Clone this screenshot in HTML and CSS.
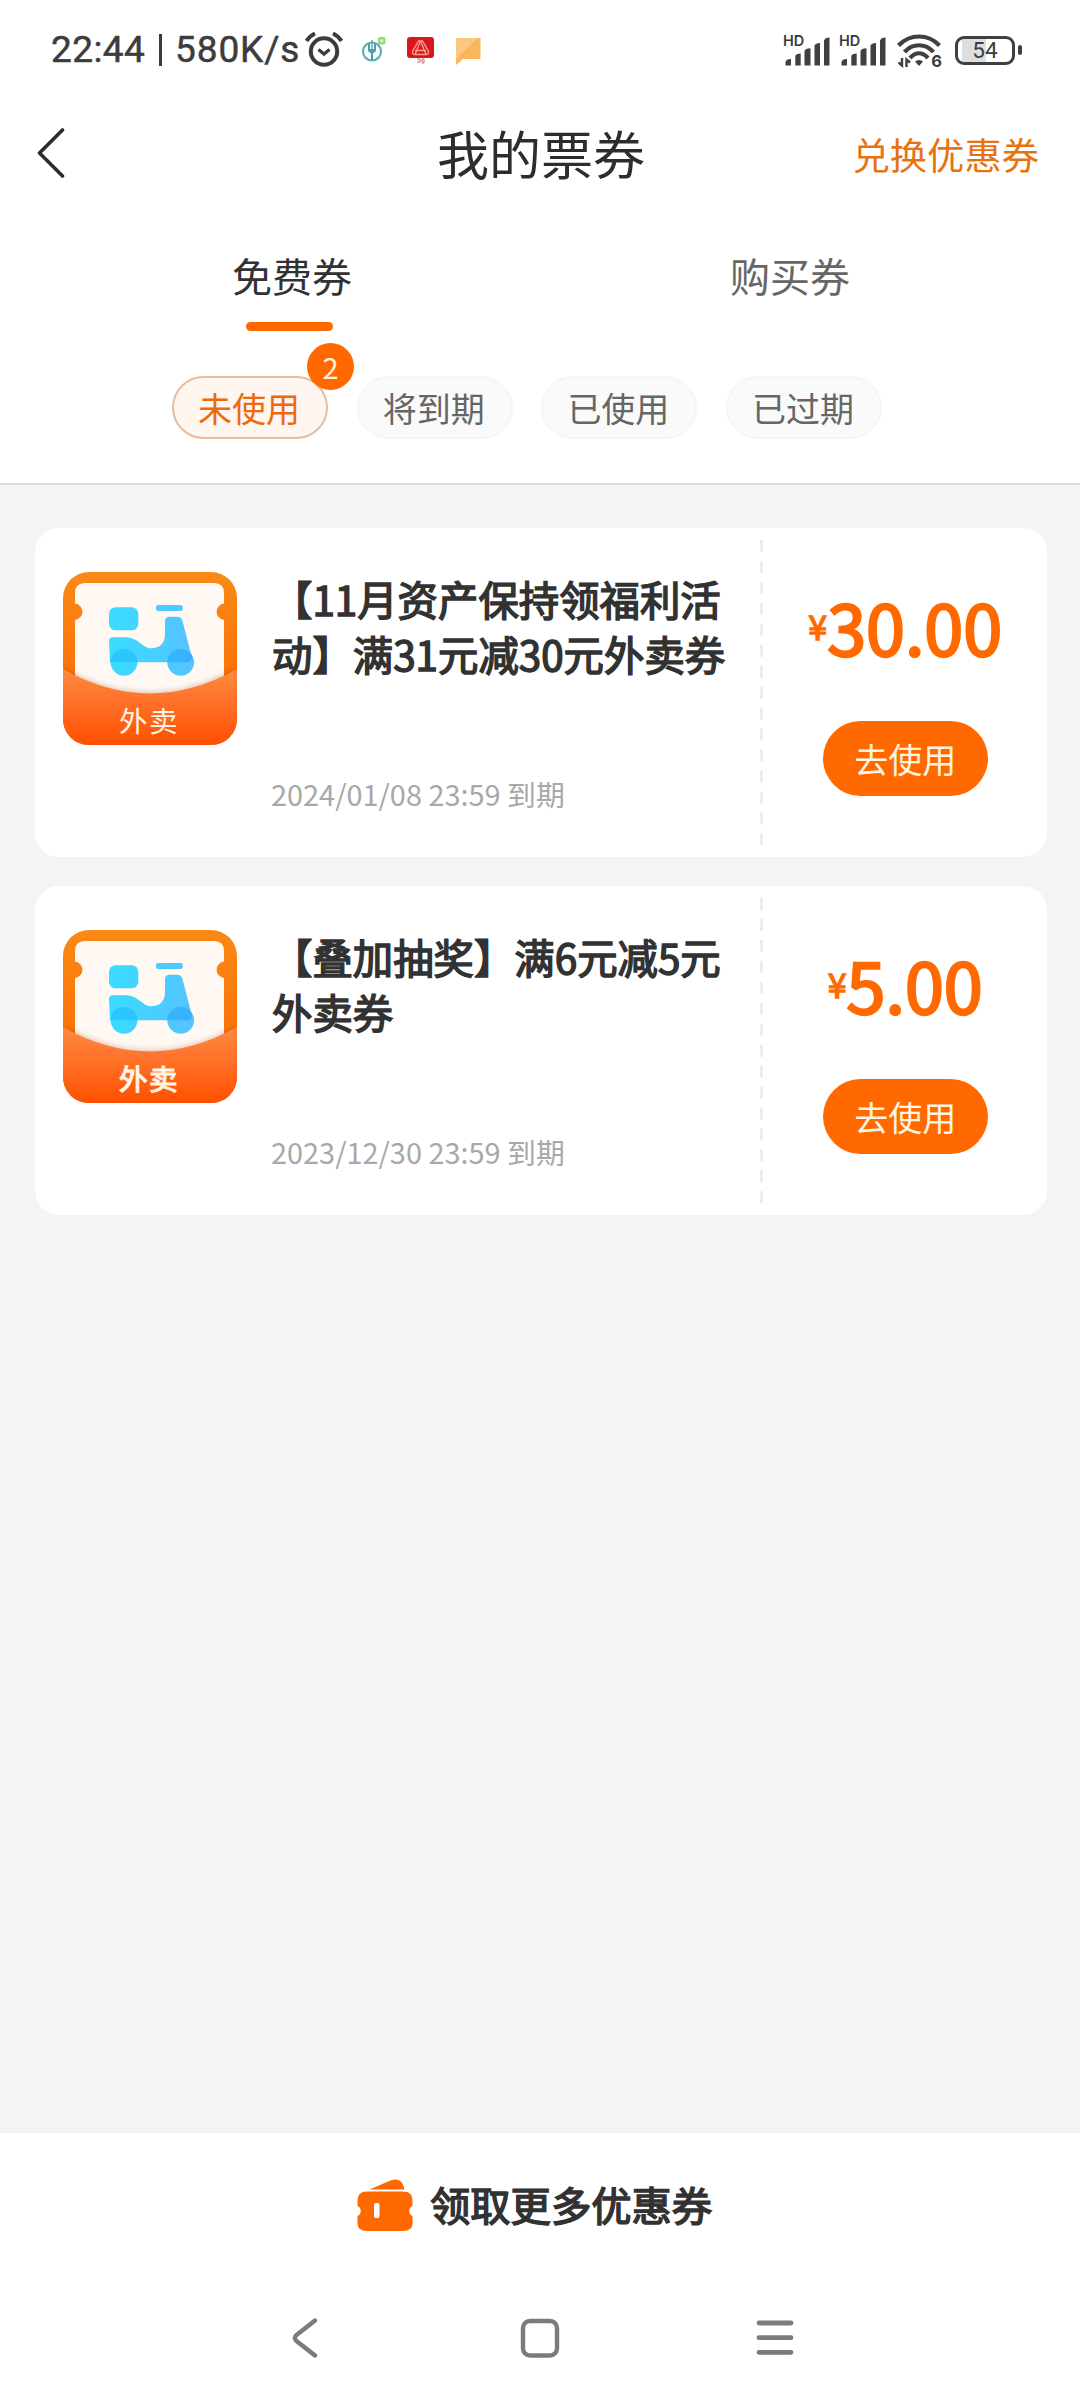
FILE: index.html
```html
<!DOCTYPE html>
<html lang="zh-CN">
<head>
<meta charset="utf-8">
<title>我的票券</title>
<link rel="stylesheet" href="styles.css">
</head>
<body>
<svg class="defs" aria-hidden="true">
  <defs>
    <linearGradient id="frame" x1="0" y1="0" x2="0" y2="1"><stop offset="0" stop-color="#f98a16"/><stop offset=".6" stop-color="#fb7206"/></linearGradient>
    <linearGradient id="flap" x1="0" y1="0" x2="0" y2="1"><stop offset="0" stop-color="#ff8a42"/><stop offset=".45" stop-color="#ff7028"/><stop offset="1" stop-color="#ff5000"/></linearGradient>
    <linearGradient id="sky" gradientUnits="userSpaceOnUse" x1="46" y1="60" x2="128" y2="60"><stop offset="0" stop-color="#39dcff"/><stop offset="1" stop-color="#55c3ff"/></linearGradient>
    <clipPath id="tile"><rect width="174" height="173" rx="26"/></clipPath>
    <filter id="soft" x="-20%" y="-20%" width="140%" height="140%"><feGaussianBlur stdDeviation="3"/></filter>
    <g id="scooter">
      <g clip-path="url(#tile)">
        <rect width="174" height="173" fill="url(#frame)"/>
        <path d="M22 11H151Q161 11 161 21V31.500A8.300 8.300 0 0 0 161 48V130H12V48A8.300 8.300 0 0 0 12 31.500V21Q12 11 22 11Z" fill="#fff8f3"/>
        <path d="M0 97Q87 146 174 97V173H0Z" fill="#8a3a10" opacity=".4" filter="url(#soft)"/>
        <path d="M0 97Q87 146 174 97V173H0Z" fill="url(#flap)"/>
      </g>
      <g fill="url(#sky)">
        <rect x="46" y="35.300" width="29.300" height="23" rx="6.500"/>
        <rect x="93" y="33" width="26.700" height="6" rx="2"/>
        <path d="M46 69Q46 65.300 50 65.300H62C76 65.300 79 76.300 88 76.300C97 76.300 102 71 102 62V49Q102 44.700 107 44.700H114Q118.500 44.700 119.500 49L128 82Q130 90.300 124 90.300H47Z"/>
        <circle cx="61" cy="90.300" r="13.400"/>
        <circle cx="117.700" cy="90.300" r="13.400"/>
      </g>
      <path d="M47.600 90.300A13.400 13.400 0 0 1 74.400 90.300Z" fill="#16b4ff" opacity=".5"/>
      <path d="M104.300 90.300A13.400 13.400 0 0 1 129 83Q129.500 90.300 124 90.300Z" fill="#169cff" opacity=".45"/>
    </g>
    <g id="signal" fill="#404040">
      <path d="M1.500 29.500V26Q2 23 7 23V29.500ZM11.300 29.500V20Q12 17.500 16.700 17.500V29.500ZM20.500 29.500V15Q21.500 12.300 26.500 12.300V29.500ZM30.500 29.500V9.500Q31.500 7 36 7V29.500ZM40 29.500V4.500Q41 1.500 45.500 1.500V29.500Z"/>
    </g>
  </defs>
</svg>

<div class="phone">
  <header class="top">
    <div class="status">
      <div class="status-left">
        <span class="clock">22:44</span><i class="bar"></i><span class="speed">580K/s</span>
        <svg class="alarm" width="38" height="36" viewBox="0 0 38 36" fill="none" stroke="#3c3c3c"><circle cx="19" cy="19.500" r="13.200" stroke-width="4"/><path d="M1.500 9Q4.500 4 10 1.500M28 1.500Q33.500 4 36.500 9" stroke-width="4"/><path d="M13.500 17.500L19 22L24.500 17.500" stroke-width="3.300"/></svg>
        <svg class="app1" width="26" height="26" viewBox="0 0 26 26" fill="none"><circle cx="11" cy="14.500" r="9" stroke="#62b0b5" stroke-width="2.200"/><path d="M11 14V23" stroke="#4b9fa8" stroke-width="2.200"/><path d="M7 6.500V13Q7 16 11 16Q15 16 15 13V6.500H13V12H9V6.500Z" fill="#4b9fa8"/><path d="M11 3V12" stroke="#4b9fa8" stroke-width="1.300"/><rect x="17" y="0" width="7.500" height="7.500" rx="2" fill="#8ddb79"/><circle cx="20.700" cy="3.800" r="1.700" fill="#d9f7c4"/></svg>
        <svg class="app2" width="27" height="28" viewBox="0 0 27 28"><rect width="27" height="21" rx="3" fill="#d9181c"/><path d="M11.500 4H15.500L21.500 14.500Q22 17.500 18.500 17.500H8.500Q5 17.500 5.500 14.500ZM13.500 4L8 17.500M13.500 4L19 17.500M8 13.500H19" fill="none" stroke="#ff9c98" stroke-width="1.300"/><path d="M10 22H13V25H10M15 22H17V26H15Z" fill="none" stroke="#e56668" stroke-width="1"/></svg>
        <svg class="app3" width="25" height="27" viewBox="0 0 25 27"><path d="M0 0H24.500V21H7L0 27Z" fill="#f9b75c"/><path d="M0 0H22L0 21Z" fill="#fbc783"/></svg>
      </div>
      <div class="status-right">
        <div class="sim"><b>HD</b><svg width="47" height="31" viewBox="0 0 47 31"><use href="#signal"/></svg></div>
        <div class="sim"><b>HD</b><svg width="47" height="31" viewBox="0 0 47 31"><use href="#signal"/></svg></div>
        <div class="wifi"><svg width="44" height="34" viewBox="0 0 44 34" fill="none" stroke="#404040" stroke-width="4.200"><path d="M1.500 11.500C13-.5 31-.5 42.500 11.500M7.500 18C15.500 9 28.500 9 36.500 18M13 24Q22 14.500 31 24"/><path d="M18 27.500Q22 24.500 26 27.500L22 32Z" fill="#404040" stroke="none"/><path d="M5 24V31.500L1.500 28.500M9.500 33V25.500L13 28.500" stroke-width="2.400"/></svg><b>6</b></div>
        <div class="battery"><span>54</span></div>
      </div>
    </div>

    <nav class="titlebar">
      <svg class="back" width="28" height="50" viewBox="0 0 28 50" fill="none" stroke="#2d2d2d" stroke-width="3.600" stroke-linecap="round" stroke-linejoin="round"><path d="M25.500 2L2.500 25L25.500 48"/></svg>
      <h1>我的票券</h1>
      <a class="redeem">兑换优惠券</a>
    </nav>

    <div class="tabs">
      <div class="tab active">免费券</div>
      <div class="tab">购买券</div>
    </div>

    <div class="chips">
      <div class="chip selected">未使用<span class="badge">2</span></div>
      <div class="chip">将到期</div>
      <div class="chip">已使用</div>
      <div class="chip">已过期</div>
    </div>
  </header>

  <main class="list">
    <article class="card">
      <svg class="tile" width="174" height="174" viewBox="0 0 174 174"><use href="#scooter"/><text class="tile-label" x="56" y="159.500">外卖</text></svg>
      <div class="info">
        <h2>【11月资产保持领福利活<br>动】满31元减30元外卖券</h2>
        <p>2024/01/08 23:59 到期</p>
      </div>
      <svg class="cut" width="3" height="307" viewBox="0 0 3 307"><path d="M1.500 0V307" stroke="#e9e9e9" stroke-width="2.400" stroke-dasharray="12 8.950"/></svg>
      <div class="value">
        <div class="price"><small>¥</small><span>30.00</span></div>
        <button class="use">去使用</button>
      </div>
    </article>
    <article class="card">
      <svg class="tile" width="174" height="174" viewBox="0 0 174 174"><use href="#scooter"/><text class="tile-label heavy" x="56" y="159.500">外卖</text></svg>
      <div class="info">
        <h2>【叠加抽奖】满6元减5元<br>外卖券</h2>
        <p>2023/12/30 23:59 到期</p>
      </div>
      <svg class="cut" width="3" height="307" viewBox="0 0 3 307"><path d="M1.500 0V307" stroke="#e9e9e9" stroke-width="2.400" stroke-dasharray="12 8.950"/></svg>
      <div class="value">
        <div class="price"><small>¥</small><span>5.00</span></div>
        <button class="use">去使用</button>
      </div>
    </article>
  </main>

  <footer class="bottom">
    <div class="more">
      <svg width="56" height="53" viewBox="0 0 56 53" fill="#ff6900"><path d="M12.500 10.500L34 1.300Q44-2 46.500 7L47.500 10.500Z"/><path d="M10 12.500H46Q55.500 12.500 55.500 21V27A5.500 5.500 0 0 0 55.500 37V44Q55.500 52 46 52H10Q.5 52 .5 44V37A5.500 5.500 0 0 0 .5 27V21Q.5 12.500 10 12.500Z"/><rect x="17" y="24" width="5.500" height="15" rx="2" fill="#fff"/></svg>
      <span>领取更多优惠券</span>
    </div>
    <div class="nav">
      <svg width="26" height="40" viewBox="0 0 26 40" fill="none" stroke="#7b7b7b" stroke-width="4.400" stroke-linecap="round"><path d="M23 2.500L4.500 17Q1 20 4.500 23L23 37.500"/></svg>
      <svg width="40" height="40" viewBox="0 0 40 40" fill="none" stroke="#7b7b7b" stroke-width="4.400"><rect x="3" y="3" width="34" height="34.500" rx="7"/></svg>
      <svg width="38" height="40" viewBox="0 0 38 40" stroke="#7b7b7b" stroke-width="4.800" stroke-linecap="round"><path d="M3 5H35M3 19.700H35M3 34.300H35"/></svg>
    </div>
  </footer>
</div>
</body>
</html>
```

FILE: styles.css
```css
* { box-sizing: border-box; margin: 0; padding: 0; }
body { font-family: "Noto Sans CJK SC", sans-serif; background: #f4f4f4; color: #323232; }
svg { display: block; flex: none; }
.defs { position: absolute; width: 0; height: 0; }
.phone { width: 1080px; height: 2400px; display: flex; flex-direction: column; }

.top { height: 485px; background: #fff; border-bottom: 2px solid #dadada; }

.status { height: 100px; padding: 0 59px 0 51px; display: flex; justify-content: space-between; color: #3c3c3c; }
.status-left, .status-right { display: flex; align-items: flex-start; }
.clock, .speed { font-family: Roboto, sans-serif; font-size: 37px; line-height: 44px; margin-top: 28px; white-space: nowrap; -webkit-text-stroke: .5px #3c3c3c; }
.clock { width: 95px; letter-spacing: .4px; }
.bar { width: 3px; height: 32px; margin: 34px 13px 0; background: #3c3c3c; }
.speed { width: 127px; letter-spacing: .9px; }
.alarm { margin: 32px 0 0 3px; }
.app1 { margin: 37px 0 0 18px; }
.app2 { margin: 37px 0 0 20px; }
.app3 { margin: 38px 0 0 22px; }
.sim { position: relative; margin: 35px 9px 0 0; padding-top: 1px; }
.sim b { position: absolute; left: -1px; top: -2px; font: 600 14.500px/16px Inter, sans-serif; }
.wifi { position: relative; margin: 34px 14px 0 1px; }
.wifi b { position: absolute; right: -1px; top: 19px; font: 700 16.500px/16px Inter, sans-serif; background: #fff; }
.battery { width: 60px; height: 29px; margin: 36px 6px 0 0; position: relative; border: 3.500px solid #404040; border-radius: 9px; background: linear-gradient(90deg, #fff 4px, #dedede 4px 28px, #fff 28px); text-align: center; font: 22.500px/23px Roboto, sans-serif; }
.battery::after { content: ""; position: absolute; right: -10px; top: 6px; width: 4px; height: 10px; border-radius: 2px; background: #404040; }

.titlebar { height: 112px; display: grid; grid-template-columns: 1fr 208px 1fr; align-items: center; padding: 0 41px 0 37px; }
.titlebar h1 { font-size: 52px; font-weight: 400; line-height: 76px; margin: -6px -3px 0 3px; color: #2d2d2d; }
.back { margin-top: -6px; }
.redeem { justify-self: end; font-size: 37.300px; line-height: 54px; margin-top: -5px; color: #e6730f; }

.tabs { display: flex; margin-left: 43px; width: 996px; height: 122px; padding-top: 33px; }
.tab { width: 498px; height: 88px; text-align: center; font-size: 40px; line-height: 60px; color: #666; }
.tab.active { color: #323232; }
.tab.active::after { content: ""; display: block; width: 87px; height: 9px; margin: 17px 0 0 203px; border-radius: 5px; background: #ff6900; }

.chips { display: flex; gap: 28.700px; padding: 42px 0 0 172px; }
.chip { position: relative; width: 156px; height: 63px; border: 2px solid #f6f6f6; border-radius: 32px; background: #fafafa; text-align: center; text-indent: -2px; font-size: 34px; line-height: 59px; color: #666; }
.chip.selected { border-color: #e8bd9e; background: #fff6ef; color: #ea6a10; }
.badge { position: absolute; left: 133px; top: -35px; width: 47px; height: 47px; border-radius: 50%; background: #ff6900; color: #fff3e0; text-indent: 0; font-size: 29px; line-height: 46px; }

.list { flex: 1; padding: 43px 33px 0 35px; }
.card { height: 329px; margin-bottom: 29px; border-radius: 24px; background: #fff; display: flex; padding-left: 28px; }
.tile { margin-top: 44px; }
.tile-label { font-size: 28.500px; letter-spacing: 1.500px; fill: #fff4e3; }
.tile-label.heavy { stroke: #fff4e3; stroke-width: 1.200px; }
.info { width: 524px; padding: 43px 0 0 35px; }
.info h2 { height: 202px; font-size: 40.400px; line-height: 55px; font-weight: 400; -webkit-text-stroke: 1.500px #323232; white-space: nowrap; }
.info p { font-size: 28.900px; line-height: 40px; margin-left: -1px; color: #a8a8a8; white-space: nowrap; }
.cut { margin-top: 12px; }
.value { width: 284px; display: flex; flex-direction: column; align-items: center; }
.price { display: flex; align-items: center; height: 100px; margin-top: 48px; color: #ff6900; line-height: 100px; }
.price small { font-size: 34px; -webkit-text-stroke: 1.300px #ff6900; }
.price span { font-size: 70px; -webkit-text-stroke: 2.500px #ff6900; }
.use { width: 165px; height: 75px; margin-top: 45px; border: 0; border-radius: 37.500px; background: #ff6900; color: #fff4e0; font: 34px/71px "Noto Sans CJK SC", sans-serif; }

.bottom { height: 267px; background: #fff; }
.more { height: 150px; padding: 46px 0 0 357px; display: flex; gap: 17px; }
.more span { font-size: 40.300px; line-height: 58px; margin-top: -4px; -webkit-text-stroke: 1.500px #323232; }
.nav { display: flex; justify-content: space-between; width: 502px; margin: 35px 0 0 292px; }
.nav svg:nth-child(2) { margin-right: -5px; }
```
